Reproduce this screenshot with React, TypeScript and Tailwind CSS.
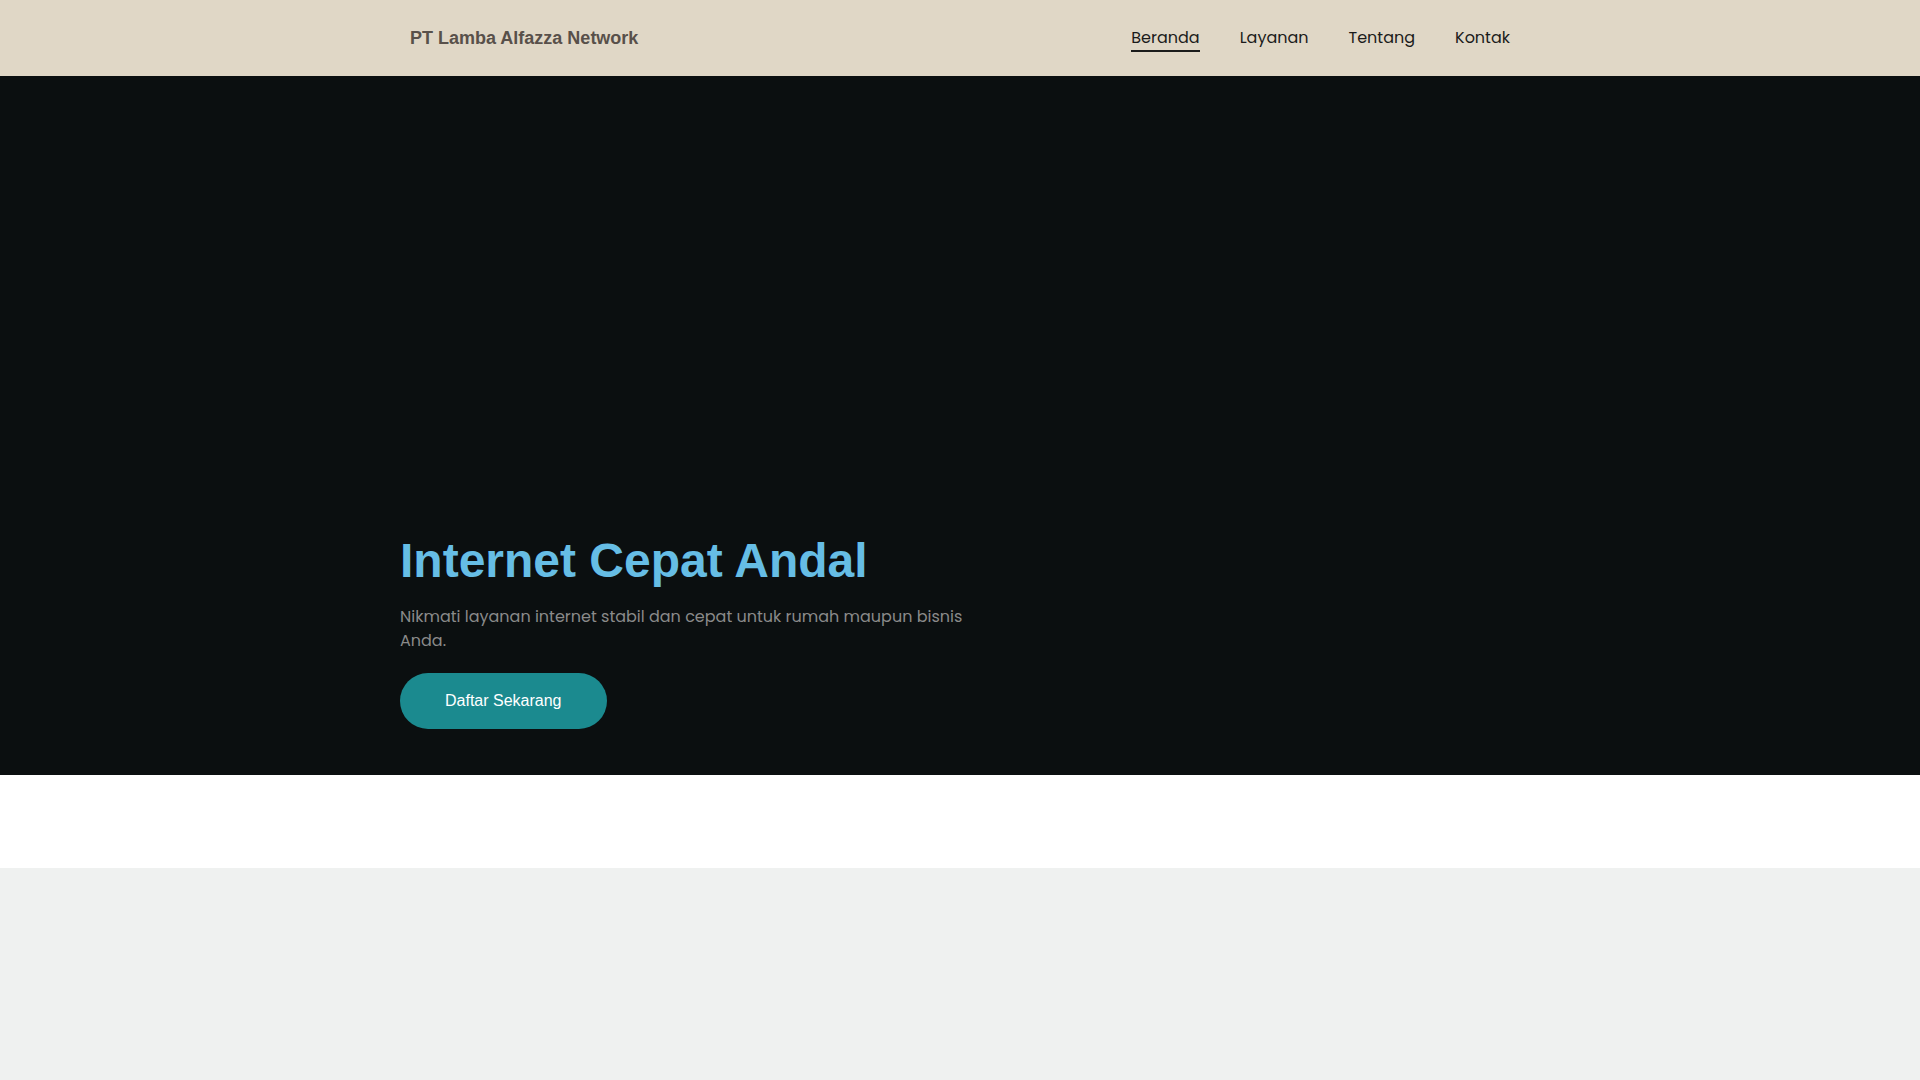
export default function App() {
  const links = ["Beranda", "Layanan", "Tentang", "Kontak"]
  return (
    <div className="min-h-screen bg-[#eff1f0] font-['Liberation_Sans',Arial,sans-serif]">
      {/* header */}
      <header className="h-[76px] bg-[#e0d7c6]">
        <div className="mx-auto flex h-full w-[1120px] items-center justify-between pl-[10px] pr-[10px]">
          <span className="text-[18px] font-bold text-[#58504a]">PT Lamba Alfazza Network</span>
          <nav className="flex items-center gap-10 font-['Poppins','Inter',sans-serif] text-[16px] text-[#1b1b1b]">
            {links.map((l, i) => (
              <a key={l} href="#" className={i === 0 ? "border-b-2 border-[#1b1b1b] pt-[2px]" : "border-b-2 border-transparent pt-[2px]"}>
                {l}
              </a>
            ))}
          </nav>
        </div>
      </header>

      {/* hero */}
      <section className="h-[699px] bg-[#0b0f10]">
        <div className="mx-auto flex h-full w-[1120px] flex-col justify-end pb-[46px]">
          <h1 className="text-[48px] font-bold leading-[1.2] text-[#66bde5]">Internet Cepat Andal</h1>
          <p className="mt-[15px] w-[570px] font-['Poppins','Inter',sans-serif] text-[16px] leading-6 text-[#8a8a8a]">
            Nikmati layanan internet stabil dan cepat untuk rumah maupun bisnis Anda.
          </p>
          <div className="mt-[20px]">
            <button className="h-[56px] rounded-full bg-[#1b8a8f] px-[45px] text-[16px] text-white">
              Daftar Sekarang
            </button>
          </div>
        </div>
      </section>

      {/* spacer band */}
      <section className="h-[93px] bg-white" />

      {/* next section */}
      <section className="h-[212px] bg-[#eff1f0]" />
    </div>
  )
}
